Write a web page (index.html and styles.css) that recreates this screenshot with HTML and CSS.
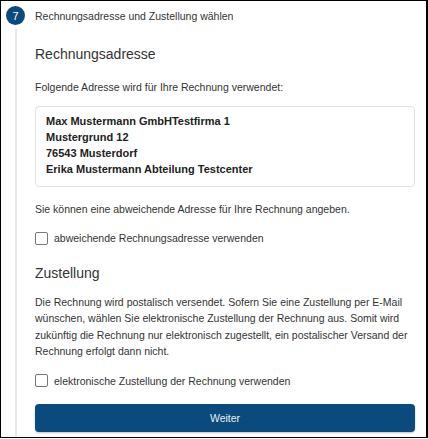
FILE: index.html
```html
<!DOCTYPE html>
<html lang="de">
<head>
<meta charset="utf-8">
<link rel="stylesheet" href="styles.css">
</head>
<body>
<div class="frame">
  <div class="step-head">
    <span class="badge">7</span>
    <span class="step-title">Rechnungsadresse und Zustellung wählen</span>
  </div>
  <div class="step-body">
    <h2 class="section-title">Rechnungsadresse</h2>
    <p class="text">Folgende Adresse wird für Ihre Rechnung verwendet:</p>
    <div class="address">
      <div>Max Mustermann GmbHTestfirma 1</div>
      <div>Mustergrund 12</div>
      <div>76543 Musterdorf</div>
      <div>Erika Mustermann Abteilung Testcenter</div>
    </div>
    <p class="text">Sie können eine abweichende Adresse für Ihre Rechnung angeben.</p>
    <label class="check"><span class="box"></span>abweichende Rechnungsadresse verwenden</label>
    <h2 class="section-title second">Zustellung</h2>
    <p class="text para">Die Rechnung wird postalisch versendet. Sofern Sie eine Zustellung per E-Mail wünschen, wählen Sie elektronische Zustellung der Rechnung aus. Somit wird zukünftig die Rechnung nur elektronisch zugestellt, ein postalischer Versand der Rechnung erfolgt dann nicht.</p>
    <label class="check second"><span class="box"></span>elektronische Zustellung der Rechnung verwenden</label>
    <button class="btn">Weiter</button>
  </div>
</div>
</body>
</html>
```

FILE: styles.css
```css
* { box-sizing: border-box; }
html, body { margin: 0; padding: 0; background: #fff; }
body { font-family: "Liberation Sans", Arial, sans-serif; color: #333; }
.frame {
  width: 428px;
  height: 438px;
  border: 1px solid #000;
  border-right-width: 2px;
  overflow: hidden;
}
.step-head {
  display: flex;
  align-items: center;
  height: 28px;
  padding-left: 5px;
  padding-top: 1px;
}
.badge {
  width: 19px;
  height: 19px;
  border-radius: 50%;
  background: #0d4a7c;
  color: #fff;
  font-size: 11px;
  display: flex;
  align-items: center;
  justify-content: center;
  flex: none;
}
.step-title {
  font-size: 10.5px;
  margin-left: 10px;
}
.step-body {
  margin-left: 14px;
  border-left: 2px solid #e8e8e8;
  padding: 16px 11px 0 18px;
  height: 420px;
}
.section-title {
  font-size: 14px;
  font-weight: normal;
  margin: 0 0 16px;
  line-height: 18px;
}
.section-title.second { margin-top: 19px; margin-bottom: 12px; }
.text {
  font-size: 10.5px;
  margin: 0;
  line-height: 16.4px;
}
.address {
  margin: 11px 0 14px;
  border: 1px solid #e2e2e2;
  border-radius: 4px;
  padding: 6px 10px 9px;
  font-size: 11px;
  font-weight: bold;
  line-height: 16px;
  color: #222;
}
.check {
  display: flex;
  align-items: center;
  font-size: 10.5px;
  margin-top: 14px;
}
.check.second { margin-top: 15px; }
.box {
  width: 13px;
  height: 13px;
  border: 1px solid #767676;
  border-radius: 2px;
  margin-right: 6px;
  flex: none;
}
.btn {
  display: block;
  width: 100%;
  height: 28px;
  margin-top: 17px;
  background: #0b4a7c;
  color: #e8eef4;
  border: none;
  border-radius: 4px;
  font-family: "Liberation Sans", Arial, sans-serif;
  font-size: 10.5px;
  box-shadow: 0 1px 2px rgba(0,0,0,0.25);
}
```
